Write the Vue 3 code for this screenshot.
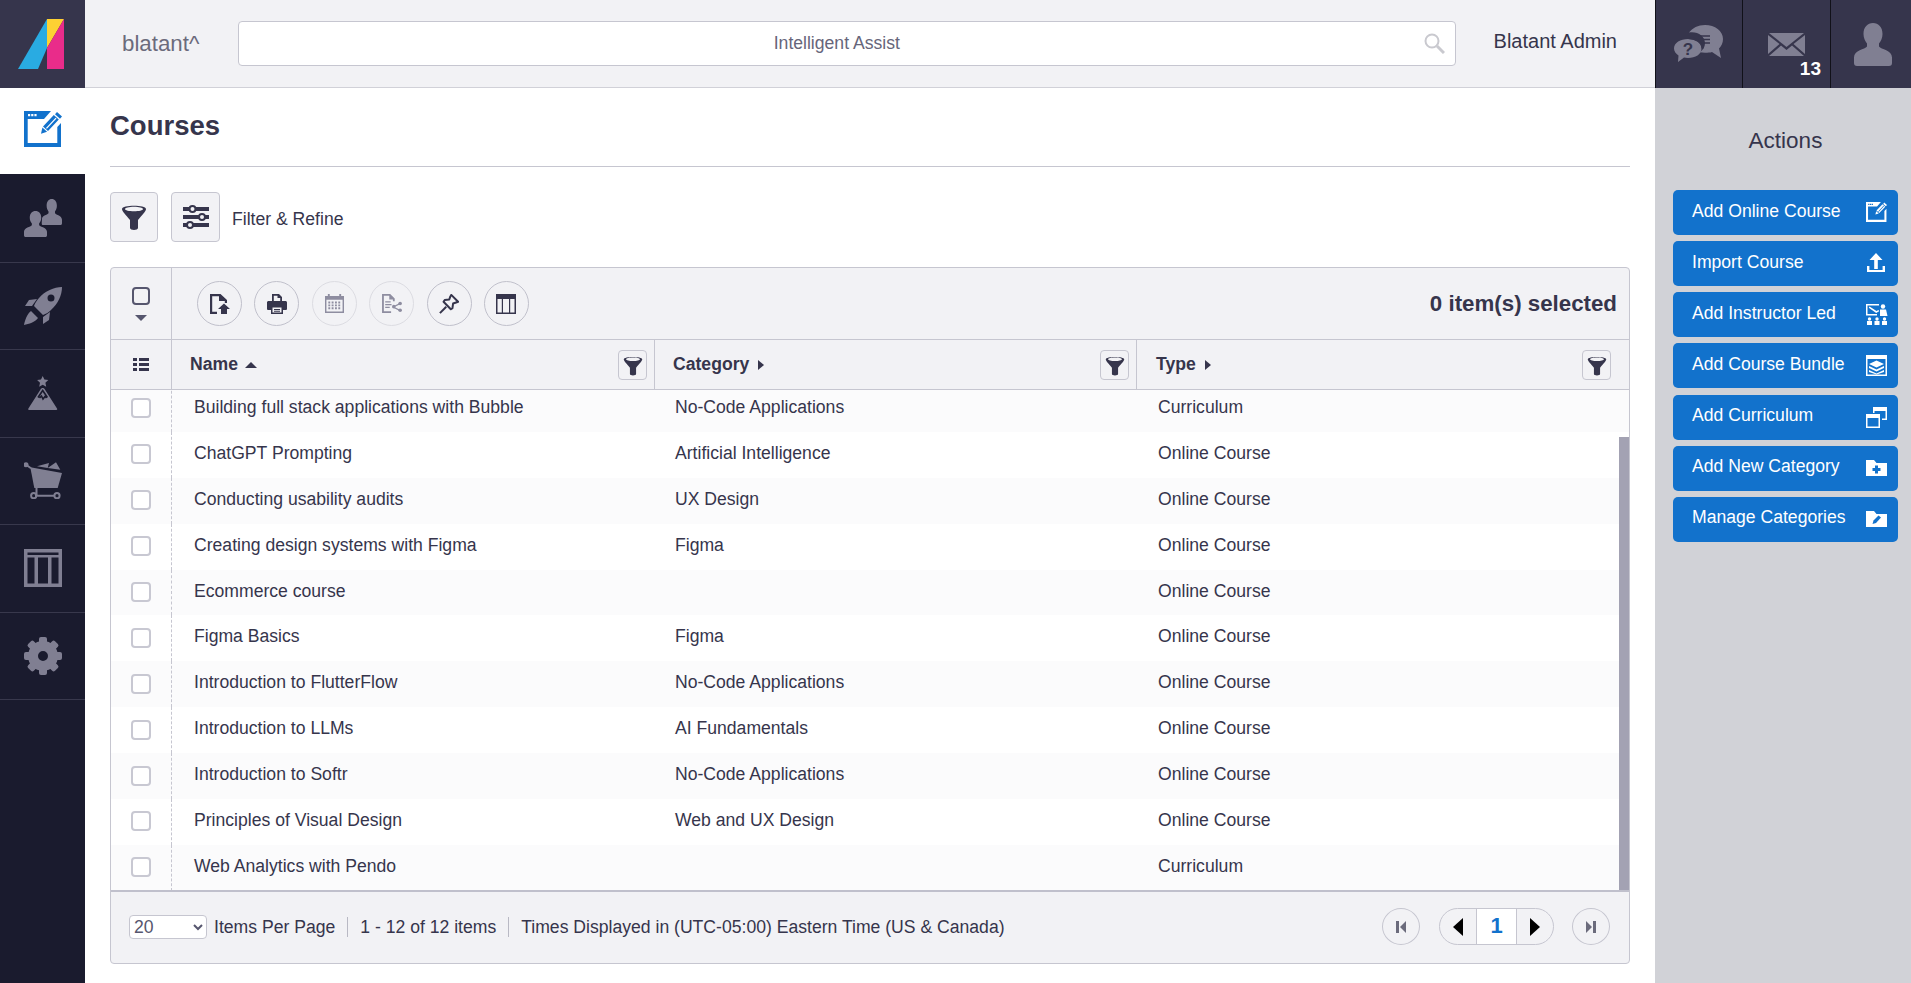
<template>
  <div class="shell">
    <!-- shared icon sprites -->
    <svg class="sprites" aria-hidden="true">
      <symbol id="i-funnel" viewBox="0 0 26 26">
        <path fill-rule="evenodd" d="M1 5C1 .8 25 .8 25 5c0 2.500-4 6-8 11v8c0 2.500-8 2.500-8 0v-8C5 11 1 7.500 1 5zm12-2.300C8 2.700 4 3.700 4 5c0 1.300 4 2.300 9 2.300s9-1 9-2.300c0-1.300-4-2.300-9-2.300z" />
      </symbol>
      <symbol id="i-window-edit" viewBox="0 0 38 36">
        <path fill-rule="evenodd" d="M0 0h27l-7 8H3.700v24h29.600V16l3.700-4v24H0zM4 3v2.300h2.200V3zM7.200 3v2.300h2.200V3zM10.400 3v2.300h2.200V3z" />
        <path fill-rule="evenodd" d="M33 1l5 4.500-2 2.300-5-4.500zM29.800 4l5 4.500L24 20l-5-4.500zM22 17l.9.8 9.600-10.200-.9-.8z" />
        <path d="M18.400 16.500l4.700 4.200-6.100 2z" />
      </symbol>
      <symbol id="i-person" viewBox="0 0 38 43" preserveAspectRatio="none">
        <path d="M19 0c5.500 0 9.500 4 9.500 11 0 4-1.500 7-3.500 9.500v3c2 3 13 3.500 13 11V40c0 2-1 3-3 3H3c-2 0-3-1-3-3v-5.500c0-7.500 11-8 13-11v-3C11 18 9.500 15 9.500 11 9.500 4 13.500 0 19 0z" />
      </symbol>
      <symbol id="i-columns" viewBox="0 0 38 38">
        <path fill-rule="evenodd" d="M0 0h38v38H0zm3.500 3.500v2.500h31V3.500zm0 5v26h7v-26zm10.500 0v26h10v-26zm13.500 0v26h7v-26z" />
      </symbol>
      <symbol id="i-folder" viewBox="0 0 21 16">
        <path d="M0 0h8l2.500 3H21v13H0z" />
      </symbol>
    </svg>

    <!-- top bar -->
    <div class="logo">
      <svg width="46" height="50" viewBox="0 0 46 50">
        <path fill="#29abe2" d="M29 0v29l-9 21H0z" />
        <path fill="#fdd133" d="M29 0h17L29 29z" />
        <path fill="#e92c8a" d="M46 0v50H29V29z" />
      </svg>
    </div>
    <header class="topbar">
      <div class="brand">blatant^</div>
      <div class="search">
        <span>Intelligent Assist</span>
        <svg class="search-icon" width="21" height="21" viewBox="0 0 21 21" fill="none" stroke="#c9c9cf">
          <circle cx="8" cy="8" r="6.500" stroke-width="2" />
          <path d="M13 13l7 7" stroke-width="3" />
        </svg>
      </div>
      <div class="username">Blatant Admin</div>
    </header>
    <div class="top-icons">
      <div class="top-icon">
        <svg width="50" height="38" viewBox="0 0 50 38" class="muted">
          <path d="M31 0c10 0 18 6 18 14 0 4-1.500 7-4 9.500l2 9.500-9-6c-2 .6-4 .8-7 .8-2 0-3.500-.2-5-.5 3-2.500 5-5.500 5-9 0-6.500-6-11-13-11-1 0-2 .1-3 .3C18.500 3 24 0 31 0z" />
          <path d="M14 14c7.500 0 13.500 3.800 13.500 9.500S21.500 33 14 33c-1.500 0-3-.2-4-.5L4 37l.5-6.500C2 28.500 0 26.500 0 23.500 0 17.800 6.500 14 14 14z" />
          <path fill="none" stroke="#36354c" stroke-width="2" d="M14 13c8 0 14.500 4.500 14.500 10.500" />
          <path fill="none" stroke="#36354c" stroke-width="1.500" d="M24 11h12M27 14.500h9M29 18h7" />
          <text x="14" y="30" text-anchor="middle" class="q-mark">?</text>
        </svg>
      </div>
      <div class="top-icon">
        <svg width="37" height="23" viewBox="0 0 37 23" class="muted">
          <path d="M1 0h35L18.500 14z" />
          <path d="M0 2l11.500 9L0 21zM37 2L25.500 11 37 21zM13 12.500l5.500 4.500 5.500-4.500L36 23H1z" />
        </svg>
        <span class="badge">13</span>
      </div>
      <div class="top-icon user-icon">
        <svg width="38" height="43" class="muted"><use href="#i-person" /></svg>
      </div>
    </div>

    <!-- left nav -->
    <nav class="sidenav">
      <div class="nav-item active">
        <svg width="38" height="36" fill="#1272cc"><use href="#i-window-edit" /></svg>
      </div>
      <div class="nav-item">
        <svg width="38" height="38" viewBox="0 0 38 38" class="muted">
          <use href="#i-person" x="17.500" y="0" width="20.500" height="26" />
          <use href="#i-person" x="0" y="12" width="23" height="26" stroke="#1a1b2e" stroke-width="3" paint-order="stroke" />
        </svg>
      </div>
      <div class="nav-item">
        <svg width="38" height="38" viewBox="0 0 38 38" class="muted">
          <path fill-rule="evenodd" d="M38 0c-8 0-17 4-23 11-2 2-4 5-5 8l9 9c3-1 6-3 8-5C34 17 38 8 38 0zM27 7.500a3.500 3.500 0 100 7 3.500 3.500 0 000-7z" />
          <path d="M13 12l-8 1-4 6h7zM26 25l-1 8-6 4v-7zM7 24c-4 3-6 9-7 14 5-1 11-3 14-7z" />
        </svg>
      </div>
      <div class="nav-item">
        <svg width="30" height="34" viewBox="0 0 30 34" class="muted">
          <path d="M14.700 0l1.700 3.600 3.900.5-2.900 2.700.8 3.900-3.500-2-3.500 2 .8-3.900-2.900-2.700 3.900-.5z" />
          <path d="M14.700 12c1 0 1.700.6 2.200 1.400L29 32.500c.6 1 .2 1.500-.8 1.500H1.200c-1 0-1.400-.5-.8-1.500L12.500 13.400c.5-.8 1.200-1.400 2.200-1.400z" />
          <path fill="none" stroke="#1a1b2e" stroke-width="1.600" d="M10 21.500l4.700-7 4.700 7M11.500 22l2-2 1.500 3 2-2.500 1.500 1.500" />
        </svg>
      </div>
      <div class="nav-item">
        <svg width="38" height="37" viewBox="0 0 38 37" class="muted">
          <path d="M13 4.300L25 1l-1.300 5zM23.700 6L32 .3l4.300 7.400z" />
          <path d="M6.300 5.300L38 11l-4.300 15H10.300z" />
          <circle cx="2" cy="2.700" r="2.500" />
          <path fill="none" stroke="#807f92" stroke-width="2" d="M2 2.700l5 3.500M12.500 26v7.500M11 33.700h20" />
          <circle cx="9.700" cy="33.700" r="2.600" fill="none" stroke="#807f92" stroke-width="2" />
          <circle cx="33" cy="33.700" r="2.600" fill="none" stroke="#807f92" stroke-width="2" />
        </svg>
      </div>
      <div class="nav-item">
        <svg width="38" height="38" class="muted"><use href="#i-columns" /></svg>
      </div>
      <div class="nav-item">
        <svg width="38" height="38" viewBox="0 0 38 38" class="muted">
          <circle cx="19" cy="19" r="10" fill="none" stroke="#807f92" stroke-width="10" />
          <rect v-for="a in gearTeeth" :key="a" x="15" y="0" width="8" height="8" rx="2" :transform="`rotate(${a} 19 19)`" />
        </svg>
      </div>
    </nav>

    <!-- page content -->
    <main class="content">
      <h1 class="page-title">Courses</h1>
      <div class="filter-row">
        <button class="tool-btn" type="button">
          <svg width="26" height="26" fill="#36354c"><use href="#i-funnel" /></svg>
        </button>
        <button class="tool-btn sliders-btn" type="button">
          <svg width="26" height="24" viewBox="0 0 26 24">
            <path fill="#36354c" d="M0 2h26v4H0zM0 10h26v4H0zM0 18h26v4H0z" />
            <g fill="#f2f2f5" stroke="#36354c" stroke-width="2">
              <circle cx="9.500" cy="4" r="3" />
              <circle cx="19" cy="12" r="3" />
              <circle cx="7" cy="20" r="3" />
            </g>
          </svg>
        </button>
        <span class="filter-label">Filter &amp; Refine</span>
      </div>

      <section class="panel">
        <div class="toolbar">
          <div class="select-cell">
            <span class="select-box"></span>
            <span class="caret-down"></span>
          </div>
          <div class="toolbar-icons">
            <button class="circle-btn" type="button">
              <svg width="20" height="20" viewBox="0 0 20 20" fill="#36354c">
                <path d="M0 0h10.500L17 6v3h-2.200V7H9V2.200H2.200v15.600H7V20H0z" />
                <path d="M14 9.500l6 5.500h-3v5h-6v-5H8z" />
              </svg>
            </button>
            <button class="circle-btn" type="button">
              <svg width="20" height="20" viewBox="0 0 20 20" fill="#36354c">
                <path d="M5 0h7l3 3v4h-1.800V4H10.500V1.800H6.800V7H5z" />
                <path d="M1.500 7h17c.8 0 1.500.7 1.500 1.500V15c0 .8-.7 1-1.500 1H16v-3.500H4V16H1.500C.7 16 0 15.800 0 15V8.500C0 7.700.7 7 1.500 7z" />
                <path fill-rule="evenodd" d="M4 12h12v8H4zm1.500 1.500v5h9v-5zM7 15h6v.9H7zm0 1.800h6v.9H7z" />
              </svg>
            </button>
            <button class="circle-btn disabled" type="button">
              <svg width="19" height="19" viewBox="0 0 20 20" fill="#8e8da0">
                <path fill-rule="evenodd" d="M3 0h2v2h10V0h2v2h3v18H0V2h3zM1.500 6v12.500h17V6z" />
                <path d="M3.500 8h2v2h-2zM7 8h2v2H7zM10.500 8h2v2h-2zM14 8h2v2h-2zM3.500 11h2v2h-2zM7 11h2v2H7zM10.500 11h2v2h-2zM14 11h2v2h-2zM3.500 14h2v2h-2zM7 14h2v2H7zM10.500 14h2v2h-2zM14 14h2v2h-2z" />
              </svg>
            </button>
            <button class="circle-btn disabled" type="button">
              <svg width="20" height="19" viewBox="0 0 22 21" fill="#8e8da0">
                <path d="M0 0h9l5 5v3h-2V6H8V2H2v17h8v2H0z" />
                <path d="M3.500 8h6v1.500h-6zM3.500 11h7v1.500h-7zM3.500 14h5v1.500h-5z" />
                <circle cx="13" cy="14" r="2" />
                <circle cx="20" cy="10.500" r="2" />
                <circle cx="20" cy="18" r="2" />
                <path d="M12.500 13.500l7-3.500.6 1.200-7 3.500zM13 14l7 3.500-.6 1.200-7-3.500z" />
              </svg>
            </button>
            <button class="circle-btn" type="button">
              <svg width="20" height="20" viewBox="0 0 22 22" fill="none" stroke="#36354c" stroke-width="2.200" stroke-linejoin="round">
                <path d="M13.500 1l7.500 7.500-2.200.8-3.300 1.200-.7 5-1.800 1.300L5 8.500l1.300-1.800 5-.7 1.200-3.300z" />
                <path d="M8 14l-7 7" />
              </svg>
            </button>
            <button class="circle-btn" type="button">
              <svg width="20" height="20" fill="#36354c" viewBox="0 0 20 20">
                <path fill-rule="evenodd" d="M0 0h20v20H0zm1.500 5v13.500h4.300V5zm5.500 0v13.500h6V5zm7.200 0v13.500h4.300V5z" />
              </svg>
            </button>
          </div>
          <div class="selected-count">0 item(s) selected</div>
        </div>

        <div class="grid-head">
          <div class="select-cell list-cell">
            <svg width="16" height="13" viewBox="0 0 16 13" fill="#36354c">
              <path d="M0 0h4v3H0zM6 0h10v3H6zM0 5h4v3H0zM6 5h10v3H6zM0 10h4v3H0zM6 10h10v3H6z" />
            </svg>
          </div>
          <div v-for="col in columns" :key="col.label" class="head-cell" :class="col.cls">
            <span class="head-label">{{ col.label }}</span>
            <span :class="col.sorted ? 'sort-up' : 'sort-right'"></span>
            <button class="col-filter" type="button">
              <svg width="20" height="21" fill="#36354c"><use href="#i-funnel" /></svg>
            </button>
          </div>
        </div>

        <div class="grid-body">
          <div class="rows">
            <div v-for="row in rows" :key="row.name" class="row">
              <div class="row-check"><span class="check-box"></span></div>
              <div class="cell name">{{ row.name }}</div>
              <div class="cell category">{{ row.category }}</div>
              <div class="cell type">{{ row.type }}</div>
            </div>
          </div>
          <div class="scroll-thumb"></div>
        </div>

        <footer class="pager">
          <select class="page-size">
            <option>20</option>
          </select>
          <span class="pager-text first">Items Per Page</span>
          <span class="pager-text">1 - 12 of 12 items</span>
          <span class="pager-text">Times Displayed in (UTC-05:00) Eastern Time (US &amp; Canada)</span>
          <div class="pager-nav">
            <button class="page-end" type="button"><span class="bar"></span><span class="tri-left small"></span></button>
            <div class="page-group">
              <button type="button"><span class="tri-left"></span></button>
              <span class="page-num">1</span>
              <button type="button"><span class="tri-right"></span></button>
            </div>
            <button class="page-end" type="button"><span class="tri-right small"></span><span class="bar"></span></button>
          </div>
        </footer>
      </section>
    </main>

    <!-- actions -->
    <aside class="actions">
      <h2>Actions</h2>
      <a v-for="a in actions" :key="a.label" class="action-btn">
        <span>{{ a.label }}</span>
        <svg width="22" height="21" viewBox="0 0 22 21" fill="#fff">
          <template v-if="a.icon === 'edit'">
            <use href="#i-window-edit" width="21" height="20" />
          </template>
          <template v-else-if="a.icon === 'upload'">
            <path d="M10 0l6.500 7h-4.700v9H8.200V7H3.500zM1 13h2.400v4h13.200v-4H19v6H1z" />
          </template>
          <template v-else-if="a.icon === 'led'">
            <path d="M0 0h13v1.500H1.500V10H11v1.500H0z" />
            <path d="M3.500 2.500L10.500 7l2-1 .7 1.200L10.200 9 2.800 3.700z" />
            <circle cx="17" cy="2.500" r="2.200" />
            <path d="M14 5.500h6l1.500 6.500h-7.500z" />
            <circle cx="3.500" cy="15" r="1.700" />
            <circle cx="11" cy="15" r="1.700" />
            <circle cx="18.500" cy="15" r="1.700" />
            <path d="M1 17h5v4H1zM8.500 17h5v4h-5zM16 17h5v4h-5z" />
          </template>
          <template v-else-if="a.icon === 'bundle'">
            <path fill-rule="evenodd" d="M0 0h21v21H0zm1.500 4v15.500h18V4z" />
            <path d="M10.500 5.500L18 9l-7.500 3.500L3 9zM3 11l7.500 3.500L18 11v2l-7.500 3.500L3 13zM3 15l7.500 3.500L18 15v2l-7.500 2.500L3 17z" />
          </template>
          <template v-else-if="a.icon === 'curriculum'">
            <path fill-rule="evenodd" d="M7 0h14v13h-5v-1.500h3.500V4h-11v2H7zM0 7h14v14H0zm1.500 4v8.500h11V11z" />
          </template>
          <template v-else>
            <use href="#i-folder" x="0" y="2" width="21" height="16" />
            <path v-if="a.icon === 'folder-plus'" fill="#1272cc" d="M9 7.500h3V10h2.500v3H12v2.500H9V13H6.500v-3H9z" />
            <path v-else fill="#1272cc" d="M12.500 6.500l2.500 2-5 5.500-3.500 1 1-3.500z" />
          </template>
        </svg>
      </a>
    </aside>
  </div>
</template>

<script setup>
const gearTeeth = [0, 45, 90, 135, 180, 225, 270, 315];

const columns = [
  { label: 'Name', cls: 'name', sorted: true },
  { label: 'Category', cls: 'category', sorted: false },
  { label: 'Type', cls: 'type', sorted: false },
];

const rows = [
  { name: 'Building full stack applications with Bubble', category: 'No-Code Applications', type: 'Curriculum' },
  { name: 'ChatGPT Prompting', category: 'Artificial Intelligence', type: 'Online Course' },
  { name: 'Conducting usability audits', category: 'UX Design', type: 'Online Course' },
  { name: 'Creating design systems with Figma', category: 'Figma', type: 'Online Course' },
  { name: 'Ecommerce course', category: '', type: 'Online Course' },
  { name: 'Figma Basics', category: 'Figma', type: 'Online Course' },
  { name: 'Introduction to FlutterFlow', category: 'No-Code Applications', type: 'Online Course' },
  { name: 'Introduction to LLMs', category: 'AI Fundamentals', type: 'Online Course' },
  { name: 'Introduction to Softr', category: 'No-Code Applications', type: 'Online Course' },
  { name: 'Principles of Visual Design', category: 'Web and UX Design', type: 'Online Course' },
  { name: 'Web Analytics with Pendo', category: '', type: 'Curriculum' },
];

const actions = [
  { label: 'Add Online Course', icon: 'edit' },
  { label: 'Import Course', icon: 'upload' },
  { label: 'Add Instructor Led', icon: 'led' },
  { label: 'Add Course Bundle', icon: 'bundle' },
  { label: 'Add Curriculum', icon: 'curriculum' },
  { label: 'Add New Category', icon: 'folder-plus' },
  { label: 'Manage Categories', icon: 'folder-edit' },
];
</script>

<style>
html,
body {
  margin: 0;
  overflow: hidden;
}
</style>

<style scoped>
.shell {
  display: grid;
  grid-template-columns: 85px 1fr 256px;
  grid-template-rows: 88px 1fr;
  height: 100vh;
  font-family: "Liberation Sans", Arial, sans-serif;
  font-size: 17.600px;
  color: #36354c;
  background: #fff;
}
.sprites {
  position: absolute;
  width: 0;
  height: 0;
}
.muted {
  fill: #807f92;
}
button {
  font-family: inherit;
  padding: 0;
  cursor: pointer;
}

.logo {
  background: #36354c;
  display: flex;
  padding: 19px 0 0 18px;
  box-sizing: border-box;
}
.topbar {
  background: #f2f2f5;
  border-bottom: 1.5px solid #d1d1d8;
  display: flex;
  align-items: center;
  padding: 0 38px 0 37px;
  box-sizing: border-box;
}
.brand {
  width: 116px;
  flex: none;
  font-size: 22.300px;
  color: #6b6b7c;
}
.search {
  position: relative;
  flex: 1;
  height: 45px;
  padding-right: 20px;
  background: #fff;
  border: 1px solid #c6c6d0;
  border-radius: 4px;
  box-sizing: border-box;
  display: flex;
  align-items: center;
  justify-content: center;
  color: #66657a;
}
.search-icon {
  position: absolute;
  right: 10px;
  top: 11px;
}
.username {
  margin-left: 38px;
  font-size: 20px;
  padding-bottom: 4px;
}
.top-icons {
  display: grid;
  grid-template-columns: 87px 88px 81px;
  background: #36354c;
}
.top-icon {
  position: relative;
  display: flex;
  align-items: center;
  justify-content: center;
  border-left: 1px solid #111119;
}
.user-icon {
  padding-left: 3px;
}
.badge {
  position: absolute;
  right: 9px;
  bottom: 8px;
  font-size: 19px;
  font-weight: 700;
  color: #fff;
}
.q-mark {
  font-family: "Liberation Sans", Arial, sans-serif;
  font-size: 17px;
  font-weight: 700;
  fill: #36354c;
}

.sidenav {
  background: #1a1b2e;
}
.nav-item {
  height: 87.500px;
  box-sizing: border-box;
  display: flex;
  align-items: center;
  justify-content: center;
  border-bottom: 1px solid #38384c;
}
.nav-item.active {
  height: 86px;
  margin-bottom: 1px;
  padding-bottom: 4px;
  background: #fff;
  border-bottom: 0;
}

.content {
  padding: 0 25px;
  min-width: 0;
}
.page-title {
  margin: 0;
  height: 78px;
  line-height: 76px;
  font-size: 27.500px;
  font-weight: 700;
  border-bottom: 1.500px solid #c6c6d0;
  box-sizing: content-box;
}
.filter-row {
  display: flex;
  align-items: center;
  margin-top: 25px;
  height: 50px;
}
.tool-btn {
  width: 48px;
  height: 50px;
  display: flex;
  align-items: center;
  justify-content: center;
  background: #f2f2f5;
  border: 1px solid #c6c6d0;
  border-radius: 4px;
  box-sizing: border-box;
}
.sliders-btn {
  width: 49px;
  margin-left: 13px;
}
.filter-label {
  margin-left: 12px;
  padding-top: 4px;
}

.panel {
  margin-top: 25px;
  height: 697px;
  border: 1px solid #c6c6d0;
  border-radius: 4px;
  background: #f2f2f5;
  box-sizing: border-box;
  display: flex;
  flex-direction: column;
  overflow: hidden;
}
.toolbar {
  height: 72px;
  flex: none;
  display: flex;
  align-items: center;
  border-bottom: 1px solid #c6c6d0;
  box-sizing: border-box;
}
.select-cell {
  width: 61px;
  height: 100%;
  flex: none;
  box-sizing: border-box;
  border-right: 1px solid #c6c6d0;
  display: flex;
  flex-direction: column;
  align-items: center;
  justify-content: center;
}
.select-box {
  width: 18px;
  height: 18px;
  border: 2px solid #56566e;
  border-radius: 4px;
  box-sizing: border-box;
}
.caret-down {
  margin-top: 10px;
  border: 6px solid transparent;
  border-top: 6px solid #56566e;
  border-bottom: 0;
}
.toolbar-icons {
  display: flex;
  gap: 12.400px;
  margin-left: 25px;
}
.circle-btn {
  width: 45px;
  height: 45px;
  display: flex;
  align-items: center;
  justify-content: center;
  background: transparent;
  border: 1px solid #c0c0cb;
  border-radius: 50%;
  box-sizing: border-box;
}
.circle-btn.disabled {
  border-color: #dcdce2;
}
.selected-count {
  margin-left: auto;
  margin-right: 12px;
  font-size: 22.300px;
  font-weight: 700;
}

.grid-head {
  height: 50px;
  flex: none;
  display: flex;
  border-bottom: 1px solid #c6c6d0;
  box-sizing: border-box;
}
.list-cell {
  height: auto;
}
.head-cell {
  position: relative;
  display: flex;
  align-items: center;
  box-sizing: border-box;
  font-weight: 700;
}
.head-cell.name {
  width: 482px;
  padding-left: 18px;
}
.head-cell.category {
  width: 482px;
  padding-left: 18px;
  border-left: 1px solid #c6c6d0;
}
.head-cell.type {
  flex: 1;
  padding-left: 19px;
  border-left: 1px solid #c6c6d0;
}
.sort-up {
  margin-left: 7px;
  border: 6px solid transparent;
  border-bottom: 6px solid #36354c;
  border-top: 0;
}
.sort-right {
  margin-left: 9px;
  border: 5px solid transparent;
  border-left: 6px solid #36354c;
  border-right: 0;
}
.col-filter {
  position: absolute;
  right: 7px;
  top: 10px;
  width: 29px;
  height: 30px;
  display: flex;
  align-items: center;
  justify-content: center;
  background: #f2f2f5;
  border: 1px solid #c6c6d0;
  border-radius: 4px;
  box-sizing: border-box;
}
.head-cell.type .col-filter {
  right: 18px;
}

.grid-body {
  position: relative;
  height: 502px;
  flex: none;
  box-sizing: border-box;
  overflow: hidden;
  background: #fff;
  border-bottom: 2px solid #c0c0cc;
}
.rows {
  margin-top: -4px;
}
.row {
  height: 45.900px;
  display: flex;
  align-items: center;
}
.row:nth-child(odd) {
  background: #fbfbfc;
}
.row-check {
  width: 61px;
  height: 100%;
  flex: none;
  box-sizing: border-box;
  border-right: 1px dashed #c6c6d0;
  display: flex;
  align-items: center;
  justify-content: center;
  padding-bottom: 1px;
}
.check-box {
  width: 20px;
  height: 20px;
  border: 2px solid #c8c8d2;
  border-radius: 4px;
  box-sizing: border-box;
  background: #fff;
}
.cell {
  padding-bottom: 3px;
}
.cell.name {
  width: 482px;
  padding-left: 22px;
  box-sizing: border-box;
}
.cell.category {
  width: 482px;
  padding-left: 21px;
  box-sizing: border-box;
}
.cell.type {
  padding-left: 22px;
}
.scroll-thumb {
  position: absolute;
  right: 0;
  top: 47px;
  bottom: 0;
  width: 10px;
  background: #a3a2b3;
}

.pager {
  flex: 1;
  display: flex;
  align-items: center;
  padding: 0 19px 2px 18px;
}
.page-size {
  width: 78px;
  height: 24px;
  flex: none;
  font-family: inherit;
  font-size: 17.600px;
  color: #56566e;
  background: #fff;
  border: 1px solid #c6c6d0;
  border-radius: 4px;
}
.pager-text {
  padding: 0 12px;
  line-height: 20px;
  border-left: 1px solid #b9b9c4;
}
.pager-text.first {
  padding-left: 7px;
  border-left: 0;
}
.pager-nav {
  margin-left: auto;
  display: flex;
  align-items: center;
}
.page-end {
  width: 38px;
  height: 37px;
  display: flex;
  align-items: center;
  justify-content: center;
  gap: 1px;
  background: transparent;
  border: 1px solid #c6c6d0;
  border-radius: 50%;
  box-sizing: border-box;
}
.page-group {
  display: flex;
  height: 37px;
  margin: 0 18px 0 19px;
  border: 1px solid #c6c6d0;
  border-radius: 19px;
  box-sizing: border-box;
  overflow: hidden;
}
.page-group button {
  width: 36px;
  display: flex;
  align-items: center;
  justify-content: center;
  background: transparent;
  border: 0;
}
.page-num {
  width: 41px;
  line-height: 34px;
  text-align: center;
  background: #fff;
  border-left: 1px solid #c6c6d0;
  border-right: 1px solid #c6c6d0;
  box-sizing: border-box;
  font-size: 22px;
  font-weight: 700;
  color: #1272cc;
}
.tri-left {
  border: 9px solid transparent;
  border-right: 10px solid #000;
  border-left: 0;
}
.tri-right {
  border: 9px solid transparent;
  border-left: 10px solid #000;
  border-right: 0;
}
.tri-left.small {
  border-width: 6px 6px 6px 0;
  border-right-color: #6b6b7c;
}
.tri-right.small {
  border-width: 6px 0 6px 6px;
  border-left-color: #6b6b7c;
}
.bar {
  width: 3px;
  height: 12px;
  background: #6b6b7c;
}

.actions {
  background: #d1d2d7;
  padding: 0 13px 0 18px;
}
.actions h2 {
  margin: 0;
  height: 102px;
  line-height: 105px;
  text-align: center;
  font-size: 22.500px;
  font-weight: 400;
}
.action-btn {
  display: flex;
  align-items: center;
  justify-content: space-between;
  height: 45px;
  margin-bottom: 6.150px;
  padding: 0 10px 0 19px;
  background: #1272cc;
  border-radius: 5px;
  color: #fff;
  box-sizing: border-box;
}
.action-btn span {
  padding-bottom: 3px;
}
</style>
